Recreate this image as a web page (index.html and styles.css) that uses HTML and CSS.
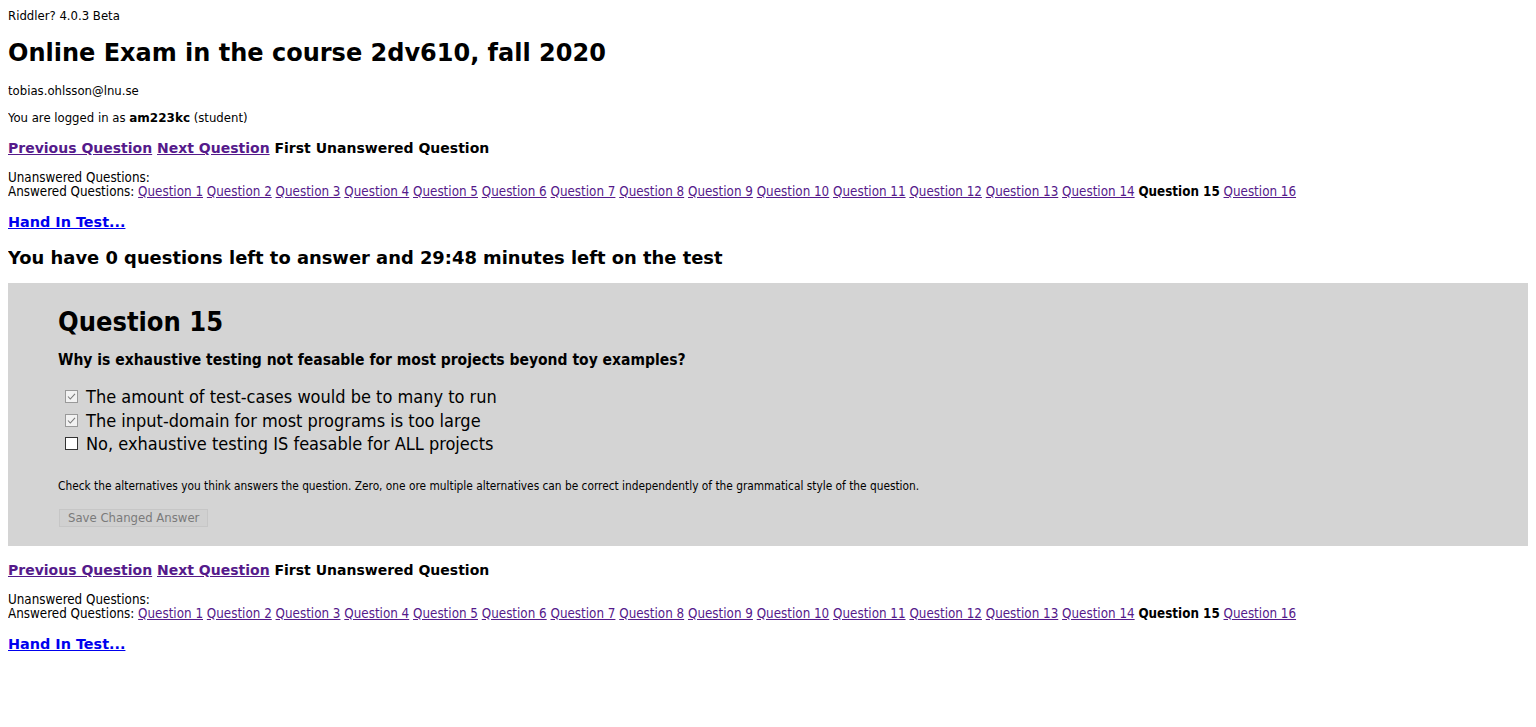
FILE: index.html
```html
<!DOCTYPE html>
<html lang="en">
<head>
<meta charset="utf-8">
<title>Riddler</title>
<link rel="stylesheet" href="styles.css">
</head>
<body>
<div class="version">Riddler? 4.0.3 Beta</div>
<h1 class="title">Online Exam in the course 2dv610, fall 2020</h1>
<div class="email">tobias.ohlsson@lnu.se</div>
<div class="login">You are logged in as <b>am223kc</b> (student)</div>

<div class="nav"><a href="#" class="visited">Previous Question</a> <a href="#" class="visited">Next Question</a> <span>First Unanswered Question</span></div>
<div class="qlist">
  <div>Unanswered Questions:</div>
  <div>Answered Questions: <a href="#">Question 1</a> <a href="#">Question 2</a> <a href="#">Question 3</a> <a href="#">Question 4</a> <a href="#">Question 5</a> <a href="#">Question 6</a> <a href="#">Question 7</a> <a href="#">Question 8</a> <a href="#">Question 9</a> <a href="#">Question 10</a> <a href="#">Question 11</a> <a href="#">Question 12</a> <a href="#">Question 13</a> <a href="#">Question 14</a> <b>Question 15</b> <a href="#">Question 16</a></div>
</div>
<div class="handin"><a href="#">Hand In Test...</a></div>

<h2 class="status">You have 0 questions left to answer and 29:48 minutes left on the test</h2>

<div class="question-box">
  <h2 class="qtitle">Question 15</h2>
  <div class="qtext">Why is exhaustive testing not feasable for most projects beyond toy examples?</div>
  <div class="options">
    <label class="option"><span class="cb checked"><svg viewBox="0 0 13 13" width="13" height="13"><path d="M3 6.5 L5.3 9 L10 3.8" fill="none" stroke="#7a7a7a" stroke-width="1.1"/></svg></span>The amount of test-cases would be to many to run</label>
    <label class="option"><span class="cb checked"><svg viewBox="0 0 13 13" width="13" height="13"><path d="M3 6.5 L5.3 9 L10 3.8" fill="none" stroke="#7a7a7a" stroke-width="1.1"/></svg></span>The input-domain for most programs is too large</label>
    <label class="option"><span class="cb"></span>No, exhaustive testing IS feasable for ALL projects</label>
  </div>
  <div class="note">Check the alternatives you think answers the question. Zero, one ore multiple alternatives can be correct independently of the grammatical style of the question.</div>
  <button class="save" disabled>Save Changed Answer</button>
</div>

<div class="nav nav-bottom"><a href="#" class="visited">Previous Question</a> <a href="#" class="visited">Next Question</a> <span>First Unanswered Question</span></div>
<div class="qlist">
  <div>Unanswered Questions:</div>
  <div>Answered Questions: <a href="#">Question 1</a> <a href="#">Question 2</a> <a href="#">Question 3</a> <a href="#">Question 4</a> <a href="#">Question 5</a> <a href="#">Question 6</a> <a href="#">Question 7</a> <a href="#">Question 8</a> <a href="#">Question 9</a> <a href="#">Question 10</a> <a href="#">Question 11</a> <a href="#">Question 12</a> <a href="#">Question 13</a> <a href="#">Question 14</a> <b>Question 15</b> <a href="#">Question 16</a></div>
</div>
<div class="handin"><a href="#">Hand In Test...</a></div>
</body>
</html>
```

FILE: styles.css
```css
html, body {
  background: #ffffff;
}
body {
  margin: 8px;
  color: #000;
  font-family: "DejaVu Sans Condensed", "DejaVu Sans", sans-serif;
  font-size: 13px;
}
.version {
  line-height: 14px;
  margin-top: 1px;
}
.title {
  font-family: "DejaVu Sans", sans-serif;
  font-size: 24px;
  font-weight: bold;
  line-height: 30px;
  margin: 15px 0 0;
}
.email {
  line-height: 14px;
  margin-top: 16px;
}
.login {
  line-height: 14px;
  margin-top: 13px;
}
.login b {
  font-family: "DejaVu Sans", sans-serif;
  font-size: 12px;
}
.nav {
  font-family: "DejaVu Sans", sans-serif;
  font-size: 14px;
  font-weight: bold;
  line-height: 18px;
  margin-top: 14px;
}
.nav a {
  color: #551a8b;
}
.qlist {
  font-size: 13.3px;
  line-height: 14px;
  margin-top: 14px;
}
.qlist a {
  color: #551a8b;
}
.qlist b {
  font-weight: bold;
}
.handin {
  font-family: "DejaVu Sans", sans-serif;
  font-size: 14.4px;
  font-weight: bold;
  line-height: 18px;
  margin-top: 14px;
}
.handin a {
  color: #0000ee;
}
.status {
  font-family: "DejaVu Sans", sans-serif;
  font-size: 17.9px;
  font-weight: bold;
  line-height: 22px;
  margin: 16px 0 0;
}
.question-box {
  background: #d4d4d4;
  margin-top: 14px;
  padding: 24px 50px 19px;
}
.qtitle {
  font-size: 27px;
  font-weight: bold;
  line-height: 30px;
  margin: 0;
}
.qtext {
  font-size: 15.5px;
  font-weight: bold;
  line-height: 18px;
  margin-top: 14px;
}
.options {
  display: flex;
  flex-direction: column;
  margin-top: 16px;
  padding-left: 7px;
}
.option {
  display: flex;
  align-items: center;
  font-size: 18px;
  line-height: 23.5px;
}
.cb {
  width: 11px;
  height: 11px;
  border: 1px solid #333;
  background: #fff;
  margin-right: 8px;
  display: flex;
  align-items: center;
  justify-content: center;
}
.cb.checked {
  border-color: #999;
  background: #f2f2f2;
}
.cb svg {
  display: block;
  flex: none;
}
.note {
  font-size: 11.8px;
  line-height: 12px;
  margin-top: 24px;
}
.save {
  display: block;
  margin: 17px 0 0 1px;
  padding: 0 8px;
  height: 18px;
  font-family: "DejaVu Sans Condensed", "DejaVu Sans", sans-serif;
  font-size: 13px;
  color: #7a7a7a;
  background: #d0d0d0;
  border: 1px solid #c6c6c6;
  border-radius: 0;
}
.nav-bottom {
  margin-top: 15px;
}
```
